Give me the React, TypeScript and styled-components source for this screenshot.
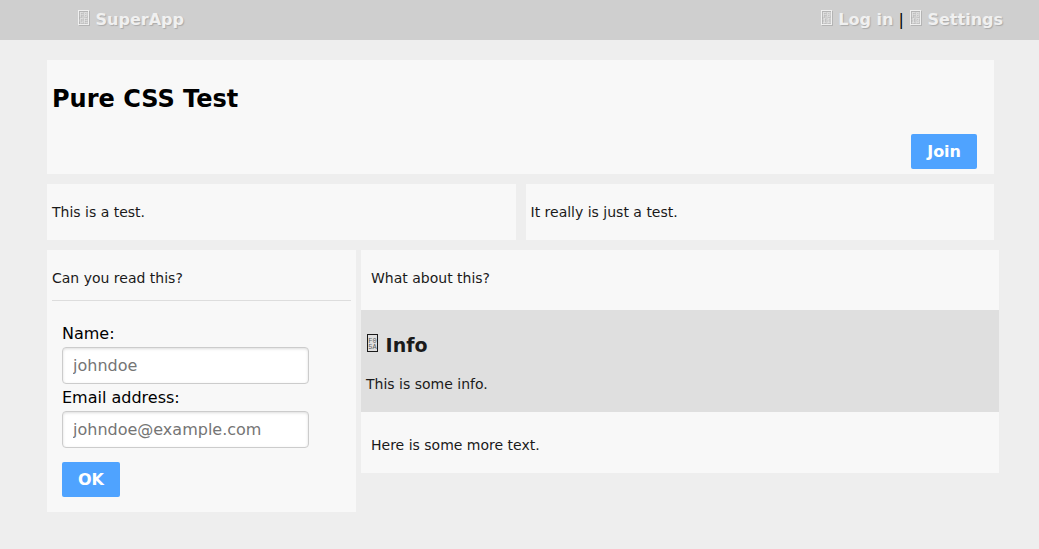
import React from "react";
import styled, { createGlobalStyle } from "styled-components";

const GlobalStyle = createGlobalStyle`
  *, *::before, *::after { box-sizing: border-box; }
  body {
    margin: 0;
    background: #eeeeee;
    color: #000;
    font: 16px/19px "DejaVu Sans", sans-serif;
  }
`;

const TopBar = styled.header`
  display: flex;
  justify-content: space-between;
  align-items: center;
  height: 40px;
  padding: 0 36px 2px 77px;
  background: #cfcfcf;
`;

const TopLink = styled.a`
  color: #f0f0f0;
  font-weight: bold;
  text-decoration: none;
  text-shadow: 1px 1px 1px #aaaaaa;

  svg { filter: drop-shadow(1px 1px 0 #b4b4b4); }
`;

const CodeSvg = styled.svg`
  margin: 0 1px;
  overflow: visible;
  vertical-align: baseline;

  rect {
    fill: none;
    stroke: currentColor;
  }

  text {
    fill: currentColor;
    fill-opacity: 0.7;
    font: 7px "Liberation Mono", monospace;
    text-shadow: none;
  }
`;

const Content = styled.main`
  padding: 15px 40px 32px 42px;
`;

const Row = styled.div`
  display: flex;
  align-items: flex-start;
`;

const Panel = styled.section`
  flex: 1;
  margin: 5px;
  padding: 19px 5px;
  background: #f8f8f8;
`;

const Banner = styled(Panel)`
  padding: 25px 17px 5px 5px;
`;

const Title = styled.h1`
  margin: 0 0 21px;
  font-size: 24px;
  line-height: 28px;
`;

const Actions = styled.div`
  display: flex;
  justify-content: flex-end;
`;

const Text = styled.p`
  margin: 0;
  color: #1a1a1a;
  font-size: 14px;
  line-height: 18px;
`;

const Button = styled.button`
  display: block;
  padding: 8px 16px;
  border: 0;
  border-radius: 2px;
  background: #4fa3ff;
  color: #fff;
  font: bold 16px/19px "DejaVu Sans", sans-serif;
  cursor: pointer;
`;

const Side = styled.div`
  display: flex;
  flex: 1 1 0;
`;

const SidePanel = styled(Panel)`
  margin-right: 5px;
  padding-bottom: 15px;
`;

const Wide = styled.section`
  flex: 2 1 0;
  margin-top: 5px;
  background: #f8f8f8;
`;

const Intro = styled.div`
  padding: 19px 10px 23px;
`;

const Outro = styled.div`
  padding: 24px 10px 19px;
`;

const Info = styled.aside`
  padding: 23px 5px 19px;
  background: #dfdfdf;
`;

const InfoTitle = styled.h2`
  margin: 0 0 18px;
  color: #1a1a1a;
  font-size: 19px;
  line-height: 24px;
`;

const Form = styled.form`
  margin-top: 13px;
  padding: 23px 10px 0;
  border-top: 1px solid #dddddd;
`;

const Label = styled.label`
  display: block;
  margin: 0 0 4px;
`;

const Input = styled.input`
  display: block;
  width: 247px;
  max-width: 100%;
  height: 37px;
  margin-bottom: 4px;
  padding: 8px 10px;
  border: 1px solid #cccccc;
  border-radius: 4px;
  background: #fff;
  box-shadow: inset 0 1px 3px #dddddd;
  font: 16px/19px "DejaVu Sans", sans-serif;

  &::placeholder { color: #757575; }
`;

const Submit = styled(Button)`
  margin-top: 14px;
`;

type CodeIconProps = { top: string; bottom: string; height?: number };

/* A framed box holding a four-digit code on two lines. */
function CodeIcon({ top, bottom, height = 15 }: CodeIconProps) {
  const middle = Math.floor(height / 2);
  return (
    <CodeSvg width="11" height={height} viewBox={`0 0 11 ${height}`} aria-hidden="true">
      <rect x="0.5" y="0.5" width="10" height={height - 1} shapeRendering="crispEdges" />
      <text x="5.5" y={middle} textAnchor="middle">{top}</text>
      <text x="5.5" y={middle + 6} textAnchor="middle">{bottom}</text>
    </CodeSvg>
  );
}

export default function App() {
  return (
    <>
      <GlobalStyle />
      <TopBar>
        <TopLink href="#home"><CodeIcon top="F0" bottom="CE" /> SuperApp</TopLink>
        <nav>
          <TopLink href="#login"><CodeIcon top="F0" bottom="11" /> Log in</TopLink>
          {" | "}
          <TopLink href="#settings"><CodeIcon top="F0" bottom="13" /> Settings</TopLink>
        </nav>
      </TopBar>
      <Content>
        <Row>
          <Banner>
            <Title>Pure CSS Test</Title>
            <Actions><Button type="button">Join</Button></Actions>
          </Banner>
        </Row>
        <Row>
          <Panel><Text>This is a test.</Text></Panel>
          <Panel><Text>It really is just a test.</Text></Panel>
        </Row>
        <Row>
          <Side>
            <SidePanel>
              <Text>Can you read this?</Text>
              <Form onSubmit={(e) => e.preventDefault()}>
                <Label htmlFor="name">Name:</Label>
                <Input id="name" type="text" placeholder="johndoe" />
                <Label htmlFor="email">Email address:</Label>
                <Input id="email" type="email" placeholder="johndoe@example.com" />
                <Submit type="submit">OK</Submit>
              </Form>
            </SidePanel>
          </Side>
          <Wide>
            <Intro><Text>What about this?</Text></Intro>
            <Info>
              <InfoTitle><CodeIcon top="F0" bottom="5A" height={18} /> Info</InfoTitle>
              <Text>This is some info.</Text>
            </Info>
            <Outro><Text>Here is some more text.</Text></Outro>
          </Wide>
        </Row>
      </Content>
    </>
  );
}
